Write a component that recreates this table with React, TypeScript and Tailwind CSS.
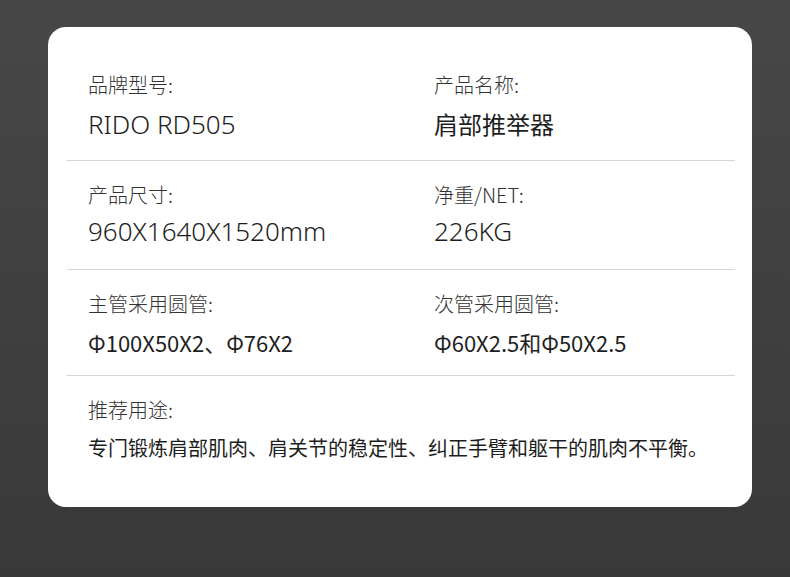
import React from "react";

const FONT = { fontFamily: "'Noto Sans CJK SC', 'Noto Sans', sans-serif" };
const LATIN = { fontFamily: "'Noto Sans', 'Noto Sans CJK SC', sans-serif" };

type Cell = { label: string; value: string; latin?: boolean };

function SpecCell({ label, value, latin, valueClass }: Cell & { valueClass: string }) {
  return (
    <div className="flex flex-col">
      <div className="text-[20px] leading-[20px] font-light text-[#333333]">{label}</div>
      {latin ? (
        <div className={`${valueClass} text-[26px] font-light`} style={LATIN}>
          {value}
        </div>
      ) : (
        <div className={valueClass}>{value}</div>
      )}
    </div>
  );
}

const ROWS: { cells: Cell[]; height: string; valueClass: string }[] = [
  {
    cells: [
      { label: "品牌型号:", value: "RIDO RD505", latin: true },
      { label: "产品名称:", value: "肩部推举器" },
    ],
    height: "h-[110px]",
    valueClass: "mt-[15px] text-[24px] leading-[28px] text-[#1e1e1e]",
  },
  {
    cells: [
      { label: "产品尺寸:", value: "960X1640X1520mm", latin: true },
      { label: "净重/NET:", value: "226KG", latin: true },
    ],
    height: "h-[109px]",
    valueClass: "mt-[12px] leading-[28px] text-[#1e1e1e]",
  },
  {
    cells: [
      { label: "主管采用圆管:", value: "Φ100X50X2、Φ76X2" },
      { label: "次管采用圆管:", value: "Φ60X2.5和Φ50X2.5" },
    ],
    height: "h-[106px]",
    valueClass: "mt-[14px] text-[22px] leading-[28px] text-[#1e1e1e]",
  },
];

export default function App() {
  return (
    <div className="w-[790px] h-[577px] bg-gradient-to-b from-[#474747] to-[#393939] pt-[27px] pl-[48px]" style={FONT}>
      <div className="w-[704px] h-[480px] bg-white rounded-[18px] pl-[19px] pr-[17px] pt-[24px]">
        {ROWS.map((row, i) => (
          <div
            key={i}
            className={`${row.height} border-b border-[#d6d6d6] pl-[21px] pt-[24px] grid grid-cols-[346px_1fr] content-start`}
          >
            {row.cells.map((c) => (
              <SpecCell key={c.label} {...c} valueClass={row.valueClass} />
            ))}
          </div>
        ))}
        {/* usage row */}
        <div className="pl-[21px] pt-[24px] flex flex-col">
          <div className="text-[20px] leading-[20px] font-light text-[#333333]">推荐用途:</div>
          <div className="mt-[14px] text-[20px] leading-[28px] text-[#1e1e1e]">
            专门锻炼肩部肌肉、肩关节的稳定性、纠正手臂和躯干的肌肉不平衡。
          </div>
        </div>
      </div>
    </div>
  );
}
